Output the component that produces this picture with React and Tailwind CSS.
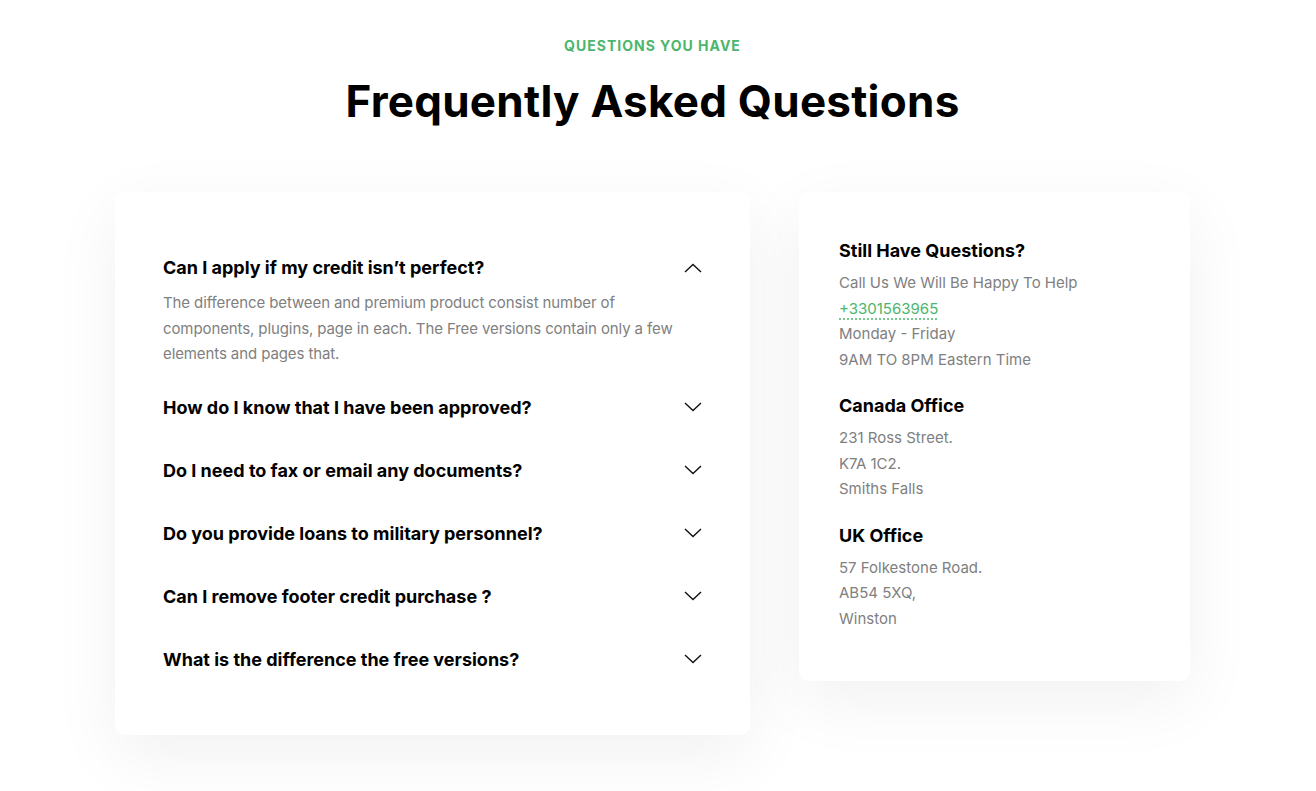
import { useState } from 'react';

const faqs = [
  {
    q: 'Can I apply if my credit isn’t perfect?',
    a: 'The difference between and premium product consist number of components, plugins, page in each. The Free versions contain only a few elements and pages that.',
  },
  { q: 'How do I know that I have been approved?', a: 'The difference between and premium product consist number of components, plugins, page in each.' },
  { q: 'Do I need to fax or email any documents?', a: 'The difference between and premium product consist number of components, plugins, page in each.' },
  { q: 'Do you provide loans to military personnel?', a: 'The difference between and premium product consist number of components, plugins, page in each.' },
  { q: 'Can I remove footer credit purchase ?', a: 'The difference between and premium product consist number of components, plugins, page in each.' },
  { q: 'What is the difference the free versions?', a: 'The difference between and premium product consist number of components, plugins, page in each.' },
];

function Chevron({ up }) {
  return (
    <svg width="18" height="10" viewBox="0 0 18 10" fill="none" stroke="#111" strokeWidth="1.4" className="shrink-0">
      {up ? <polyline points="1,9 9,1.5 17,9" /> : <polyline points="1,1 9,8.5 17,1" />}
    </svg>
  );
}

function Info({ title, children, first }) {
  return (
    <div className={first ? '' : 'mt-[20px]'}>
      <h4 className="text-[18px] leading-[27px] font-bold text-black">{title}</h4>
      <div className="mt-[6px] text-[15px] leading-[25.5px] text-[#808080]">{children}</div>
    </div>
  );
}

export default function App() {
  const [open, setOpen] = useState(0);

  return (
    <div className="min-h-screen bg-white pt-[36px] pb-[60px]" style={{ fontFamily: 'Inter, "Noto Sans", sans-serif' }}>
      {/* Title */}
      <div className="text-center pr-[11px]">
        <p className="text-[14px] leading-[20px] font-bold uppercase tracking-[1px] text-[#4bb66c]">Questions you have</p>
        <h2 className="mt-[19px] text-[44px] leading-[53px] font-bold text-black tracking-[0.25px]">
          Frequently Asked Questions
        </h2>
      </div>

      <div className="mt-[64px] flex items-start ml-[115px] gap-[49px]">
        {/* FAQ card */}
        <div className="w-[635px] bg-white rounded-[10px] shadow-[0_20px_70px_rgba(0,0,0,0.06)] px-[48px] py-[44px]">
          {faqs.map((item, i) => (
            <div key={i}>
              <button
                onClick={() => setOpen(open === i ? -1 : i)}
                className="w-full h-[63px] flex items-center justify-between text-left"
              >
                <span className="text-[18px] leading-[27px] font-bold text-black">{item.q}</span>
                <Chevron up={open === i} />
              </button>
              {open === i && (
                <p className="-mt-[9px] pb-[9px] pr-[10px] text-[15px] leading-[25.5px] tracking-[-0.1px] text-[#808080]">{item.a}</p>
              )}
            </div>
          ))}
        </div>

        {/* Contact card */}
        <div className="w-[391px] bg-white rounded-[10px] shadow-[0_20px_70px_rgba(0,0,0,0.06)] pl-[40px] pr-[30px] pt-[45px] pb-[50px]">
          <Info title="Still Have Questions?" first>
            <p>Call Us We Will Be Happy To Help</p>
            <p>
              <a href="#" className="text-[#4bb66c] underline decoration-dotted underline-offset-[5px]">
                +3301563965
              </a>
            </p>
            <p>Monday - Friday</p>
            <p>9AM TO 8PM Eastern Time</p>
          </Info>
          <Info title="Canada Office">
            <p>231 Ross Street.</p>
            <p>K7A 1C2.</p>
            <p>Smiths Falls</p>
          </Info>
          <Info title="UK Office">
            <p>57 Folkestone Road.</p>
            <p>AB54 5XQ,</p>
            <p>Winston</p>
          </Info>
        </div>
      </div>
    </div>
  );
}
